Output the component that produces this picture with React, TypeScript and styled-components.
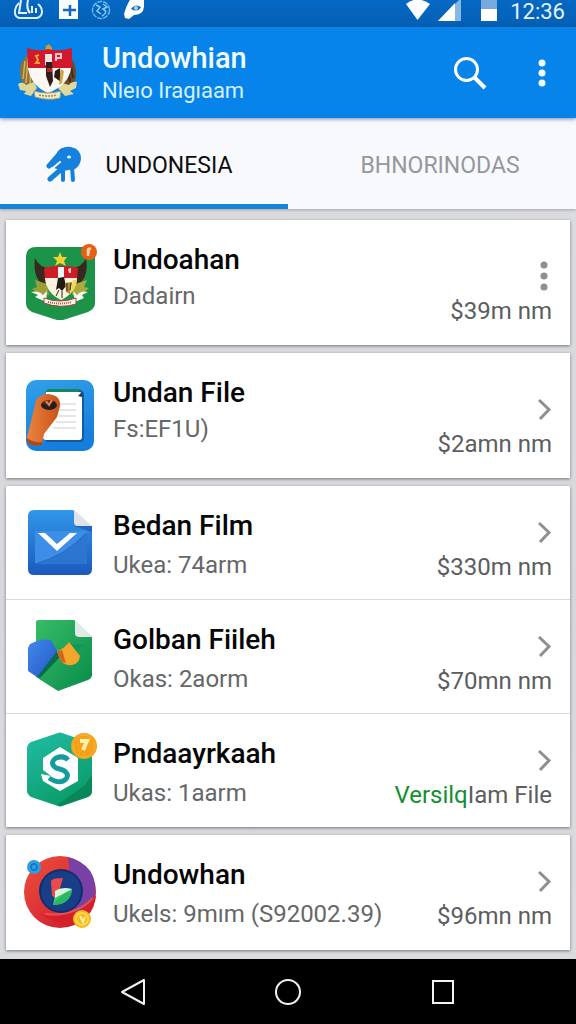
import React from 'react';
import styled, { createGlobalStyle } from 'styled-components';

const GlobalStyle = createGlobalStyle`
  *, *::before, *::after { box-sizing: border-box; }
  body {
    margin: 0;
    background: #000;
    font-family: Roboto, "Liberation Sans", sans-serif;
  }
  button { font: inherit; color: inherit; border: 0; background: none; padding: 0; cursor: pointer; }
  svg { display: block; }
`;

const Screen = styled.div`
  display: flex;
  flex-direction: column;
  min-height: 100vh;
  background: linear-gradient(180deg, #dddde1 0%, #d6d8db 60%, #dadce0 100%);
`;

const StatusBar = styled.div`
  display: flex;
  justify-content: space-between;
  height: 27px;
  padding: 0 11px 0 14px;
  background: linear-gradient(180deg, #0568c4, #0560b3);
  color: #fff;
`;

const StatusGroup = styled.div`
  display: flex;
  align-items: flex-start;
`;

const Clock = styled.time`
  margin-left: 12px;
  font-size: 22px;
  line-height: 24px;
  color: #e4f3ff;
`;

const AppBar = styled.header`
  position: relative;
  z-index: 1;
  display: flex;
  align-items: center;
  height: 91px;
  padding: 0 22px 0 16px;
  background: #0684e9;
  color: #f1fbff;
  box-shadow: 0 1px 4px rgba(40, 60, 110, 0.6);
`;

const Brand = styled.div`
  flex: 1;
  min-width: 0;
  margin-left: 22px;
  padding-top: 2px;
`;

const BrandTitle = styled.h1`
  margin: 0;
  font-size: 29px;
  line-height: 34px;
  font-weight: 500;
  white-space: nowrap;
`;

const BrandSubtitle = styled.p`
  margin: 0;
  font-size: 22px;
  line-height: 32px;
  color: #d6f1ff;
  white-space: nowrap;
`;

const IconButton = styled.button`
  display: flex;
  justify-content: center;
  align-items: center;
  height: 48px;
`;

const SearchButton = styled(IconButton)`
  width: 48px;
  margin-right: 36px;
`;

const Tabs = styled.nav`
  display: flex;
  height: 91px;
  background: #f8f9fd;
  box-shadow: 0 1px 3px rgba(60, 60, 80, 0.35);
`;

const Tab = styled.button<{ $active?: boolean }>`
  width: 50%;
  display: flex;
  justify-content: center;
  align-items: center;
  gap: 24px;
  padding: ${(p) => (p.$active ? '10px 10px 0 0' : '10px 0 0 16px')};
  border-bottom: 5px solid ${(p) => (p.$active ? '#1883d8' : 'transparent')};
  font-size: 23px;
  line-height: 32px;
  color: ${(p) => (p.$active ? '#0c0c0e' : '#96979b')};
`;

const List = styled.main`
  flex: 1;
  display: flex;
  flex-direction: column;
  gap: 8px;
  padding: 11px 6px 8px;
`;

const Card = styled.section`
  background: #fefffe;
  box-shadow: 0 1px 3px rgba(50, 50, 60, 0.6);
`;

const Row = styled.article`
  display: flex;
  align-items: flex-start;
  padding: 24px 18px 15px 16px;
  & + & { border-top: 1px solid #d9dadc; }
  &:only-child { padding-bottom: 17px; }
`;

const RowIcon = styled.div<{ $roomy?: boolean }>`
  flex: none;
  margin-top: ${(p) => (p.$roomy ? 0 : -6)}px;
`;

const RowText = styled.div`
  flex: 1;
  min-width: 0;
  margin-left: 15px;
`;

const RowTitle = styled.h2`
  margin: 0;
  font-size: 28px;
  line-height: 32px;
  font-weight: 500;
  color: #060606;
  white-space: nowrap;
`;

const RowSubtitle = styled.p<{ $roomy?: boolean }>`
  margin: ${(p) => (p.$roomy ? 4 : 7)}px 0 0;
  font-size: 24px;
  line-height: 32px;
  color: #66676a;
  white-space: nowrap;
`;

const RowAside = styled.div<{ $roomy?: boolean }>`
  display: flex;
  flex-direction: column;
  align-items: flex-end;
  gap: 2px;
  padding-top: ${(p) => (p.$roomy ? 16 : 6)}px;
`;

const RowAction = styled.button`
  display: flex;
  justify-content: flex-end;
  align-items: center;
  height: 32px;
  color: #8f8f91;
`;

const RowValue = styled.span`
  font-size: 24px;
  line-height: 34px;
  color: #5c5d60;
  white-space: nowrap;
`;

const Accent = styled.span`
  color: #12902f;
`;

const NavBar = styled.nav`
  display: flex;
  justify-content: center;
  gap: 107px;
  height: 65px;
  background: #000;
  color: #f2f2f2;
`;

const NavButton = styled.button`
  display: flex;
  justify-content: center;
  align-items: center;
  width: 48px;
  height: 65px;
`;

const Chevron = () => (
  <svg width="16" height="24" viewBox="0 0 16 24" fill="none" stroke="currentColor" strokeWidth="3">
    <path d="M3 3L13 12.500L4 22" />
  </svg>
);

const Dots = ({ radius, gap, height }: { radius: number; gap: number; height: number }) => (
  <svg width="16" height={height} viewBox="0 0 16 32" fill="currentColor" preserveAspectRatio="xMidYMin meet">
    {[-1, 0, 1].map((n) => (
      <circle key={n} cx={8} cy={height / 2 + n * gap} r={radius} />
    ))}
  </svg>
);

const StatusLeft = () => (
  <svg width="134" height="24" viewBox="14 0 134 24" fill="none">
    <path d="M19 3C14 8 13 16 19 18H37C44 16 43 8 38 4" stroke="#d9f0ff" strokeWidth="2" />
    <path d="M21 0L19 13H27M28 0Q26 9 30 13M32 6V13M36 8V13" stroke="#e8f7ff" strokeWidth="2" />
    <path d="M59 0H78V19H59Z" fill="#f6fcff" />
    <path d="M63 10H76M70 5V16" stroke="#1269bb" strokeWidth="2.500" />
    <circle cx="101" cy="10" r="8.500" stroke="#65b9f2" strokeWidth="1.500" strokeDasharray="5 1" />
    <path d="M96 5L100 7L97 11L101 14M103 4L107 7L103 9Q109 12 102 16" stroke="#8acdf9" strokeWidth="1.500" />
    <path d="M130 0H144V7Q143 15 134 15L129 19L125 18L124 14Q127 4 130 0Z" fill="#fff" />
    <path d="M131 9Q135 3 141 7Q138 13 131 9Z" fill="#1269bb" />
    <circle cx="136" cy="8" r="2" fill="#a9d4f6" />
  </svg>
);

const StatusRight = () => (
  <svg width="92" height="24" viewBox="408 0 92 24">
    <path d="M408 4Q419 -5 432 4L419.500 20Z" fill="#fff" />
    <path d="M463 0V21H440L461 0Z" fill="#86b6e4" />
    <path d="M457 3V21H440Z" fill="#fff" />
    <path d="M483 0H499V9H483Z" fill="#76a9dd" />
    <path d="M483 9H499V21H483Z" fill="#fff" />
  </svg>
);

const SearchIcon = () => (
  <svg width="36" height="36" viewBox="0 0 36 36" fill="none" stroke="#fff">
    <circle cx="14.500" cy="14.500" r="11" strokeWidth="3" />
    <path d="M22 22L33 33" strokeWidth="4" />
  </svg>
);

const Emblem = () => (
  <svg width="64" height="60" viewBox="0 0 64 60">
    <path d="M13 10Q2 20 4 32Q5 43 17 45L20 20Z" fill="#8b713b" />
    <path d="M50 10Q61 18 60 33Q59 43 47 45L44 20Z" fill="#6d4a2b" />
    <path d="M9 18L7 36M12 15L10 40M15 19L14 42" stroke="#d4b35a" strokeWidth="1.500" />
    <path d="M54 17L57 35M51 19L54 39" stroke="#3f2a1c" strokeWidth="2" />
    <path d="M2 41Q7 38 10 42L18 39L21 45L15 53L8 51L10 48L4 47Z" fill="#ded79a" />
    <path d="M61 39Q56 38 53 42L46 40L42 45L49 53L58 51L54 48L60 45Z" fill="#e0d99b" />
    <path d="M29 7L30 3L33 1L36 5L36 9Z" fill="#c7a032" />
    <path d="M11 5Q23 9 32 6Q43 9 56 5V25H12Z" fill="#d2182d" />
    <path d="M12 25H55Q53 42 32 50Q15 43 12 25Z" fill="#fbf8f4" />
    <path d="M29 11H36V22H29Z" fill="#f1e3df" />
    <path d="M40 18V11H45V15H40" fill="none" stroke="#f3c6c7" strokeWidth="2" />
    <path d="M23 12L20 13L22 17L20 20H24" fill="none" stroke="#eaa52f" strokeWidth="2" />
    <path d="M30 19H36L37 38L34 44L30 33Z" fill="#35191b" />
    <path d="M31 25H36V29H31Z" fill="#b02a28" />
    <path d="M39 28L44 25L45 39L38 34Z" fill="#2b1b14" />
    <path d="M45 26L48 28L46 40L43 42Z" fill="#d1a73c" />
    <path d="M18 48Q32 52 45 48L44 55Q32 58 19 54Z" fill="#efe9c4" stroke="#a9955f" />
    <path d="M23 52Q32 54 41 52" fill="none" stroke="#978a67" strokeWidth="1.500" strokeDasharray="2 1" />
  </svg>
);

const TabIcon = () => (
  <svg width="36" height="40" viewBox="0 0 36 40" fill="none" stroke="#1681dc" strokeLinecap="round">
    <path d="M12 5Q18 0 25 1Q35 3 35 13Q34 20 29 23L17 25L5 21Z" fill="#1681dc" stroke="none" />
    <path d="M16 5L3 20M19 20L4 33" strokeWidth="5" />
    <path d="M17 20V34M26 21L27 34" strokeWidth="4" />
    <path d="M1 27L14 16" stroke="#f8f9fd" strokeWidth="2" />
    <ellipse cx="23" cy="11" rx="2" ry="1.500" fill="#e8f5ff" stroke="none" />
  </svg>
);

const GarudaIcon = () => (
  <svg width="76" height="76" viewBox="0 0 76 76">
    <path d="M14 3H63Q73 3 73 13V59Q73 65 66 68L38 77L10 68Q4 65 4 59V13Q4 3 14 3Z" fill="#1c9348" />
    <path d="M13 14Q10 36 25 44L29 24Q17 24 13 14Z" fill="#38291e" />
    <path d="M64 14Q68 36 51 44L48 24Q60 24 64 14Z" fill="#38291e" />
    <path d="M13 36L25 40L27 51L17 50L10 45L15 43Z" fill="#9b9f39" />
    <path d="M65 36L53 40L50 51L60 50L67 44L62 43Z" fill="#adaa3f" />
    <path d="M38 8L40 13L45 13L42 17L44 22L38 19L33 22L35 17L31 13H36Z" fill="#efd22f" />
    <path d="M22 24Q38 19 56 24L55 36H23Z" fill="#cf1d27" />
    <path d="M23 34H55Q54 49 39 56Q24 49 23 34Z" fill="#faf4df" />
    <path d="M36 23H42V34H36Z" fill="#eef3f3" />
    <path d="M46 25L49 24V29H47Z" fill="#f2cbc5" />
    <path d="M36 34L42 33L44 42L40 47L37 44L34 46Z" fill="#211913" />
    <path d="M43 39L50 38L48 50L44 48Z" fill="#b28e31" />
    <path d="M45 39V47M49 39L48 46M37 46L34 52M40 47V54" stroke="#34251a" strokeWidth="1" />
    <path d="M51 36H55Q54 45 48 50Z" fill="#f5d84b" />
    <path d="M9 48Q17 46 21 51L25 47L24 58L13 53L16 51Z" fill="#fbf8ed" />
    <path d="M66 48Q59 46 55 51L51 47L53 58L62 54L60 51Z" fill="#fbf8ed" />
    <path d="M22 54Q38 60 54 54V60Q38 65 22 59Z" fill="#fffaf0" stroke="#a74438" />
    <path d="M26 58Q38 61 50 58" fill="none" stroke="#b05046" strokeWidth="2" strokeDasharray="1 1" />
    <circle cx="67" cy="8" r="8" fill="#e75e17" />
    <path d="M66 12V6Q66 4 69 5M65 8H68" fill="none" stroke="#ffd9aa" strokeWidth="2.500" />
  </svg>
);

const DocumentIcon = () => (
  <svg width="76" height="76" viewBox="0 0 76 76">
    <defs>
      <linearGradient id="docBlue" x2="0.300" y2="1"><stop stopColor="#31a0e9" /><stop offset="1" stopColor="#157ddb" /></linearGradient>
      <linearGradient id="docOrange" x2="1"><stop stopColor="#ed843e" /><stop offset="1" stopColor="#c65317" /></linearGradient>
    </defs>
    <rect x="4" y="3" width="68" height="71" rx="10" fill="url(#docBlue)" />
    <path d="M25 17Q25 13 29 13H57Q62 13 62 18V61Q62 65 58 65H25L21 61Z" fill="#155999" />
    <path d="M23 16Q24 12 28 12H59L56 15H25Z" fill="#16875c" />
    <path d="M24 15H57Q60 15 60 18V60Q60 63 57 63H24Q21 63 21 60Z" fill="#fff" />
    <path d="M56 19L60 20V15Z" fill="#163b57" />
    <path d="M36 27H54M37 33H54M36 39H54M34 45H54M31 51H54" stroke="#c8cdd2" />
    <path d="M14 24Q17 17 26 17Q39 18 38 29L35 40L22 57L20 67Q16 70 6 65L5 60Z" fill="url(#docOrange)" />
    <path d="M5 61Q11 66 20 65V68Q9 70 5 65Z" fill="#af4717" />
    <ellipse cx="27" cy="28" rx="8" ry="5" fill="#64301f" />
    <path d="M21 26L27 29L32 24L35 28Q34 32 28 33Q20 32 19 28Z" fill="#241e20" />
    <path d="M24 24L27 28L30 23" fill="none" stroke="#e68445" strokeWidth="2" />
  </svg>
);

const MailIcon = () => (
  <svg width="76" height="76" viewBox="0 0 76 76">
    <defs><linearGradient id="mailBlue" x2="0" y2="1"><stop stopColor="#3197e8" /><stop offset="1" stopColor="#1c59bd" /></linearGradient></defs>
    <path d="M12 6H51L70 23V65Q70 71 64 71H12Q6 71 6 65V12Q6 6 12 6Z" fill="url(#mailBlue)" />
    <path d="M13 27H65V60H13Z" fill="#3d8ee6" />
    <path d="M13 60Q43 52 65 28V60Z" fill="#2c76d2" />
    <path d="M13 60Q43 52 63 30" fill="none" stroke="#2868bd" />
    <path d="M52 6L70 22H56Q52 22 52 18Z" fill="#dde2eb" />
    <path d="M52 22H70V28L61 25Z" fill="#2565bd" />
    <path d="M16 29H23L35 40L48 29H55L35 47Z" fill="#fff" />
  </svg>
);

const MapIcon = () => (
  <svg width="76" height="76" viewBox="0 0 76 76">
    <defs>
      <linearGradient id="mapGreen" x2="1" y2="1"><stop stopColor="#36bd65" /><stop offset="1" stopColor="#088b4b" /></linearGradient>
      <linearGradient id="mapBlue" x2="1" y2="1"><stop stopColor="#4188ed" /><stop offset="1" stopColor="#2458c4" /></linearGradient>
    </defs>
    <path d="M14 4Q14 2 17 2H52L70 19V57Q70 60 66 62L36 73L14 59Z" fill="url(#mapGreen)" />
    <path d="M49 26H63L55 35Z" fill="#0f9a55" />
    <path d="M33 30L38 39L18 60L14 58Z" fill="#086c50" />
    <path d="M8 26Q20 20 29 22L35 33L15 59L6 53V30Z" fill="url(#mapBlue)" />
    <path d="M53 2L70 19H57Q53 19 53 15Z" fill="#e0eae6" />
    <path d="M35 33Q42 31 47 24L58 38Q57 46 50 47Q42 48 38 42Z" fill="#f5a52c" />
    <path d="M35 33L40 32L44 45Q40 45 38 42Z" fill="#cf681e" />
  </svg>
);

const HexagonIcon = () => (
  <svg width="76" height="76" viewBox="0 0 76 76">
    <defs><linearGradient id="hexTeal" x2="0.500" y2="1"><stop stopColor="#20bda5" /><stop offset="1" stopColor="#0c9c6b" /></linearGradient></defs>
    <path d="M36 1Q38 0 40 1L66 10Q70 12 70 17V59Q70 63 66 65L40 74Q38 75 36 74L9 65Q5 62 5 59V17Q5 12 9 10Z" fill="url(#hexTeal)" />
    <path d="M70 43V59Q70 63 66 65L40 74L35 73L56 58L63 53Z" fill="#08774b" fillOpacity=".55" />
    <path d="M38 15L56 26V49L38 59L21 49L19 42L29 44L21 38V26Z" fill="#fff" />
    <path d="M46 28Q42 23 34 26Q27 31 34 36L41 38Q48 42 44 47Q38 53 27 46" fill="none" stroke="#159b9d" strokeWidth="5" />
    <circle cx="62" cy="14" r="13" fill="#f4a11b" />
    <circle cx="62" cy="14" r="11" fill="none" stroke="#ffb330" />
    <path d="M58 9H65L61 18" fill="none" stroke="#fff0a8" strokeWidth="4" />
  </svg>
);

const OrbitIcon = () => (
  <svg width="76" height="76" viewBox="0 0 76 76">
    <defs><linearGradient id="orbRed" x2="1" y2="1"><stop stopColor="#ef503b" /><stop offset="1" stopColor="#c91530" /></linearGradient></defs>
    <circle cx="38" cy="39" r="36" fill="url(#orbRed)" />
    <path d="M46 4Q76 12 73 42Q66 56 53 61L48 20Z" fill="#7940a5" />
    <path d="M17 61Q54 70 74 42Q72 68 44 74Z" fill="#d5202c" />
    <path d="M23 61Q53 64 71 45" fill="none" stroke="#ed4e49" strokeWidth="2" />
    <circle cx="39" cy="38" r="22" fill="#112d72" />
    <circle cx="39" cy="38" r="20" fill="#173e87" />
    <path d="M29 28Q30 25 41 25L38 35L36 46L30 43Z" fill="#ef4a4b" />
    <path d="M34 37L50 36Q48 52 31 52Z" fill="#40c56f" />
    <path d="M33 38Q40 33 50 36L33 45Z" fill="#d9f7df" />
    <path d="M50 37Q48 52 31 52Q38 42 50 37Z" fill="#28b763" />
    <circle cx="12" cy="14" r="7" fill="#2e9de4" />
    <circle cx="12" cy="14" r="3" fill="none" stroke="#1475bd" strokeWidth="1.500" />
    <circle cx="60" cy="66" r="9" fill="#f8b91d" />
    <circle cx="60" cy="66" r="6" fill="none" stroke="#ffd94c" strokeWidth="2" />
    <path d="M58 63L61 69L63 64" fill="none" stroke="#fff1ab" strokeWidth="2" />
  </svg>
);

type Item = {
  title: string;
  subtitle: string;
  value: React.ReactNode;
  Icon: React.ComponentType;
  roomy?: boolean;
  menu?: boolean;
};

const groups: Item[][] = [
  [{ title: 'Undoahan', subtitle: 'Dadairn', value: '$39m nm', Icon: GarudaIcon, roomy: true, menu: true }],
  [{ title: 'Undan File', subtitle: 'Fs:EF1U)', value: '$2amn nm', Icon: DocumentIcon, roomy: true }],
  [
    { title: 'Bedan Film', subtitle: 'Ukea: 74arm', value: '$330m nm', Icon: MailIcon },
    { title: 'Golban Fiileh', subtitle: 'Okas: 2aorm', value: '$70mn nm', Icon: MapIcon },
    {
      title: 'Pndaayrkaah',
      subtitle: 'Ukas: 1aarm',
      value: <><Accent>Versilq</Accent>Iam File</>,
      Icon: HexagonIcon,
    },
  ],
  [{ title: 'Undowhan', subtitle: 'Ukels: 9mım (S92002.39)', value: '$96mn nm', Icon: OrbitIcon }],
];

const ListRow = ({ title, subtitle, value, Icon, roomy, menu }: Item) => (
  <Row>
    <RowIcon $roomy={roomy}><Icon /></RowIcon>
    <RowText>
      <RowTitle>{title}</RowTitle>
      <RowSubtitle $roomy={roomy}>{subtitle}</RowSubtitle>
    </RowText>
    <RowAside $roomy={roomy}>
      <RowAction aria-label={menu ? 'More options' : 'Open'}>
        {menu ? <Dots radius={3.5} gap={11} height={32} /> : <Chevron />}
      </RowAction>
      <RowValue>{value}</RowValue>
    </RowAside>
  </Row>
);

export default function App() {
  return (
    <>
      <GlobalStyle />
      <Screen>
        <StatusBar>
          <StatusGroup><StatusLeft /></StatusGroup>
          <StatusGroup>
            <StatusRight />
            <Clock>12:36</Clock>
          </StatusGroup>
        </StatusBar>
        <AppBar>
          <Emblem />
          <Brand>
            <BrandTitle>Undowhian</BrandTitle>
            <BrandSubtitle>Nleıo Iragıaam</BrandSubtitle>
          </Brand>
          <SearchButton aria-label="Search"><SearchIcon /></SearchButton>
          <IconButton as="button" aria-label="More options" style={undefined}>
            <svg width="24" height="32" viewBox="0 0 24 32" fill="currentColor">
              <circle cx="12" cy="6" r="3.500" />
              <circle cx="12" cy="16" r="3.500" />
              <circle cx="12" cy="26" r="3.500" />
            </svg>
          </IconButton>
        </AppBar>
        <Tabs>
          <Tab $active><TabIcon />UNDONESIA</Tab>
          <Tab>BHNORINODAS</Tab>
        </Tabs>
        <List>
          {groups.map((items) => (
            <Card key={items[0].title}>
              {items.map((item) => <ListRow key={item.title} {...item} />)}
            </Card>
          ))}
        </List>
        <NavBar>
          <NavButton aria-label="Back">
            <svg width="28" height="30" viewBox="0 0 28 30" fill="none" stroke="currentColor" strokeWidth="2" strokeLinejoin="round">
              <path d="M25 3V27L3 15Z" />
            </svg>
          </NavButton>
          <NavButton aria-label="Home">
            <svg width="28" height="28" viewBox="0 0 28 28" fill="none" stroke="currentColor" strokeWidth="2">
              <circle cx="14" cy="14" r="12" />
            </svg>
          </NavButton>
          <NavButton aria-label="Recent apps">
            <svg width="24" height="26" viewBox="0 0 24 26" fill="none" stroke="currentColor" strokeWidth="2">
              <rect x="2" y="2" width="20" height="22" />
            </svg>
          </NavButton>
        </NavBar>
      </Screen>
    </>
  );
}
